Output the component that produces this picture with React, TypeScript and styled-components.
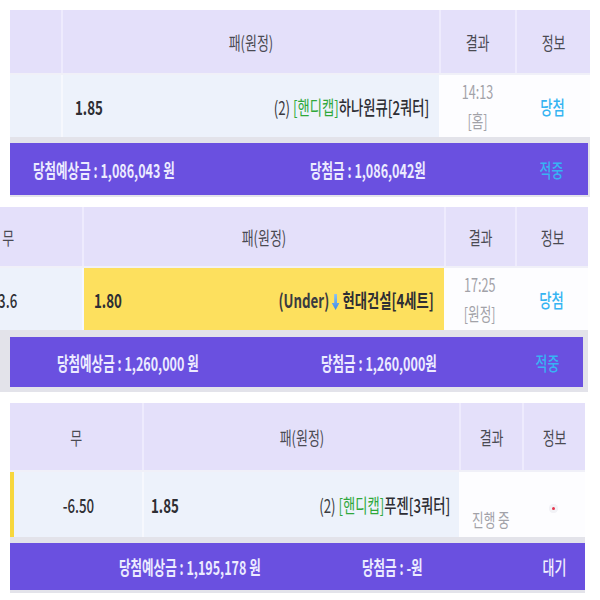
import React, { ReactNode } from "react";
import styled, { createGlobalStyle } from "styled-components";

const GlobalStyle = createGlobalStyle`
  html, body {
    margin: 0;
    padding: 0;
    background: #ffffff;
    overflow: hidden;
  }
  body {
    font-family: "Noto Sans CJK KR", "Noto Sans", sans-serif;
  }
`;

const Page = styled.div`
  width: 600px;
  height: 600px;
  overflow: hidden;
  display: flex;
  flex-direction: column;
`;

const Panel = styled.section<{ $left: number; $width: number; $top: number }>`
  flex-shrink: 0;
  margin-top: ${(p) => p.$top}px;
  margin-left: ${(p) => p.$left}px;
  width: ${(p) => p.$width}px;
  background: #e3e3ea;
`;

const Grid = styled.div<{ $cols: number[]; $height: number }>`
  display: grid;
  grid-template-columns: ${(p) => p.$cols.map((c) => `${c}px`).join(" ")};
  height: ${(p) => p.$height}px;
  overflow: hidden;
`;

const HeadRow = styled(Grid)`
  background: #e4e0fa;
  border-bottom: 2px solid #f0f0f8;
  box-sizing: border-box;
`;

const HeadCell = styled.div`
  display: flex;
  align-items: center;
  justify-content: center;
  color: #4a4a52;
  font-size: 18px;
  border-left: 2px solid #eeebfd;
  overflow: hidden;

  &:first-child {
    border-left: none;
  }
`;

const Cell = styled.div<{ $bg?: string; $mark?: boolean }>`
  display: flex;
  align-items: center;
  justify-content: center;
  background: ${(p) => p.$bg ?? "#fdfdff"};
  border-left: ${(p) => (p.$mark ? "4px solid #f7d73c" : "none")};
  overflow: hidden;
`;

const PickCell = styled.div<{ $bg: string; $padL: number; $padR: number }>`
  display: flex;
  align-items: center;
  justify-content: space-between;
  padding: 0 ${(p) => p.$padR}px 0 ${(p) => p.$padL}px;
  background: ${(p) => p.$bg};
  border-left: 2px solid #f6f8fd;
  color: #33333a;
  font-size: 19px;
  overflow: hidden;
`;

const Squeeze = styled.span<{ $origin?: string; $scale?: number }>`
  display: inline-block;
  white-space: nowrap;
  transform: scaleX(${(p) => p.$scale ?? 0.7});
  transform-origin: ${(p) => p.$origin ?? "center"};
`;

const Odds = styled(Squeeze)`
  font-weight: 700;
  color: #2e2e34;
`;

const Team = styled.span<{ $heavy?: boolean }>`
  font-weight: ${(p) => (p.$heavy ? 700 : 500)};
  color: #2e2e34;
`;

const Plain = styled.span<{ $heavy?: boolean }>`
  font-weight: ${(p) => (p.$heavy ? 700 : 400)};
  color: #3a3a40;
`;

const Handicap = styled.span`
  color: #2fa83a;
`;

const Line = styled(Squeeze)`
  font-size: 19px;
  color: #2f2f35;
  font-weight: 500;
`;

const Result = styled(Squeeze)`
  font-size: 18px;
  line-height: 29px;
  color: #a2a2a8;
  text-align: center;
`;

const Status = styled(Squeeze)<{ $tone?: string }>`
  font-size: 19px;
  color: ${(p) => p.$tone ?? "#35b4f2"};
  font-weight: 500;
`;

const Dot = styled.span`
  display: block;
  width: 3px;
  height: 3px;
  margin-top: 7px;
  border-radius: 50%;
  background: #e5364f;
  box-shadow: 0 0 0 3px rgba(220, 220, 230, 0.35);
`;

const Footer = styled.div<{ $pad: string }>`
  padding: ${(p) => p.$pad};
`;

const Bar = styled.div<{ $height: number; $lead: number; $first: number; $status: number }>`
  display: grid;
  grid-template-columns: ${(p) => `${p.$first}px 1fr ${p.$status}px`};
  align-items: center;
  height: ${(p) => p.$height}px;
  padding-left: ${(p) => p.$lead}px;
  background: #6a50e0;
  color: #ecebff;
  font-size: 19px;
  font-weight: 700;
`;

const BarStatus = styled.div`
  text-align: center;
`;

const Arrow = () => (
  <svg width="11" height="16" viewBox="0 0 11 16" style={{ margin: "0 4px", verticalAlign: "-2px" }}>
    <defs>
      <linearGradient id="arw" x1="0" y1="0" x2="0" y2="1">
        <stop offset="0" stopColor="#8cc3f5" />
        <stop offset="1" stopColor="#3d8ae6" />
      </linearGradient>
    </defs>
    <path d="M3.5 0 H7.5 V9 H11 L5.5 16 L0 9 H3.5 Z" fill="url(#arw)" />
  </svg>
);

type TicketProps = {
  top: number;
  left: number;
  width: number;
  cols: number[];
  headH: number;
  rowH: number;
  colA?: string;
  colAText?: string;
  colAMark?: boolean;
  pickBg: string;
  padL: number;
  padR: number;
  odds: string;
  pick: ReactNode;
  result: ReactNode;
  info: ReactNode;
  footPad: string;
  barH: number;
  lead: number;
  first: number;
  expected: string;
  won: string;
  status: string;
  statusTone: string;
};

function Ticket(t: TicketProps) {
  return (
    <Panel $top={t.top} $left={t.left} $width={t.width}>
      <HeadRow $cols={t.cols} $height={t.headH}>
        <HeadCell>{t.colA && <Squeeze $scale={0.72}>{t.colA}</Squeeze>}</HeadCell>
        <HeadCell>
          <Squeeze $scale={0.72}>패(원정)</Squeeze>
        </HeadCell>
        <HeadCell>
          <Squeeze $scale={0.72}>결과</Squeeze>
        </HeadCell>
        <HeadCell>
          <Squeeze $scale={0.72}>정보</Squeeze>
        </HeadCell>
      </HeadRow>
      <Grid $cols={t.cols} $height={t.rowH}>
        <Cell $bg="#edf2fb" $mark={t.colAMark}>
          {t.colAText && <Line>{t.colAText}</Line>}
        </Cell>
        <PickCell $bg={t.pickBg} $padL={t.padL} $padR={t.padR}>
          <Odds $origin="left">{t.odds}</Odds>
          <Squeeze $origin="right">{t.pick}</Squeeze>
        </PickCell>
        <Cell>
          <Result>{t.result}</Result>
        </Cell>
        <Cell>{t.info}</Cell>
      </Grid>
      <Footer $pad={t.footPad}>
        <Bar $height={t.barH} $lead={t.lead} $first={t.first} $status={t.cols[3] - 2}>
          <div>
            <Squeeze $origin="left" $scale={0.66}>
              {t.expected}
            </Squeeze>
          </div>
          <div>
            <Squeeze $origin="left" $scale={0.66}>
              {t.won}
            </Squeeze>
          </div>
          <BarStatus>
            <Status $tone={t.statusTone} $scale={0.68}>
              {t.status}
            </Status>
          </BarStatus>
        </Bar>
      </Footer>
    </Panel>
  );
}

export default function App() {
  return (
    <Page>
      <GlobalStyle />
      <Ticket
        top={10}
        left={10}
        width={580}
        cols={[51, 378, 76, 75]}
        headH={65}
        rowH={62}
        pickBg="#edf2fb"
        padL={12}
        padR={10}
        odds="1.85"
        pick={
          <>
            <Plain>(2) </Plain>
            <Handicap>[핸디캡]</Handicap>
            <Team>하나원큐[2쿼터]</Team>
          </>
        }
        result={
          <>
            14:13
            <br />
            [홈]
          </>
        }
        info={<Status>당첨</Status>}
        footPad="6px 2px 2px 0"
        barH={52}
        lead={23}
        first={277}
        expected="당첨예상금 : 1,086,043 원"
        won="당첨금 : 1,086,042원"
        status="적중"
        statusTone="#37b3f4"
      />
      <Ticket
        top={10}
        left={-66}
        width={654}
        cols={[148, 362, 71, 73]}
        headH={61}
        rowH={62}
        colA="무"
        colAText="3.6"
        pickBg="#fde05e"
        padL={10}
        padR={10}
        odds="1.80"
        pick={
          <>
            <Plain $heavy>(Under)</Plain>
            <Arrow />
            <Team $heavy>현대건설[4세트]</Team>
          </>
        }
        result={
          <>
            17:25
            <br />
            [원정]
          </>
        }
        info={<Status>당첨</Status>}
        footPad="7px 5px 5px 76px"
        barH={50}
        lead={47}
        first={264}
        expected="당첨예상금 : 1,260,000 원"
        won="당첨금 : 1,260,000원"
        status="적중"
        statusTone="#37b3f4"
      />
      <Ticket
        top={11}
        left={10}
        width={575}
        cols={[132, 317, 63, 63]}
        headH={69}
        rowH={65}
        colA="무"
        colAText="-6.50"
        colAMark
        pickBg="#edf2fb"
        padL={7}
        padR={9}
        odds="1.85"
        pick={
          <>
            <Plain>(2) </Plain>
            <Handicap>[핸디캡]</Handicap>
            <Team>푸젠[3쿼터]</Team>
          </>
        }
        result={
          <>
            &nbsp;
            <br />
            진행 중
          </>
        }
        info={<Dot />}
        footPad="6px 0 3px 0"
        barH={47}
        lead={109}
        first={243}
        expected="당첨예상금 : 1,195,178 원"
        won="당첨금 : -원"
        status="대기"
        statusTone="#f2f1ff"
      />
    </Page>
  );
}
